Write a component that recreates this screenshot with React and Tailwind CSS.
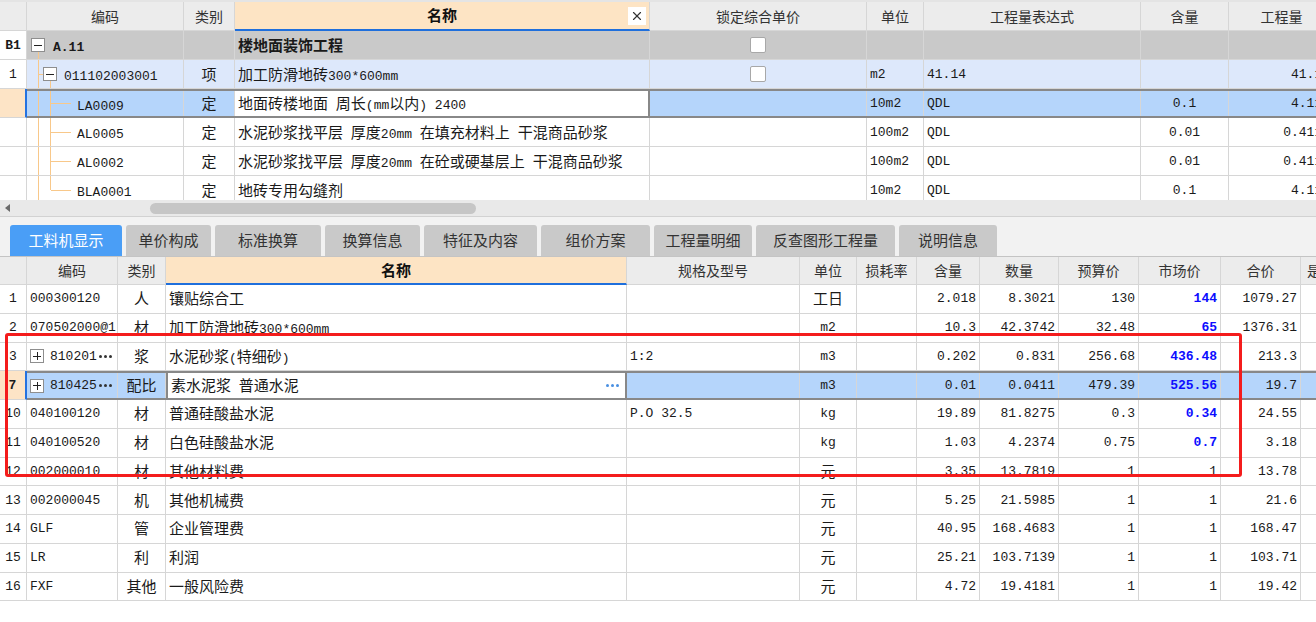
import React from 'react';
import { X } from 'lucide-react';

const CJK_SPLIT = /([\u2E80-\u9FFF\u3000-\u303F\uFF00-\uFFEF]+)/;
const isCJK = (s) => /[\u2E80-\u9FFF\u3000-\u303F\uFF00-\uFFEF]/.test(s);

function Txt({ s, bold, blue }) {
  if (!s) return null;
  return (
    <span
      className={`font-['Liberation_Mono',monospace] text-[13px] leading-none whitespace-pre ${bold ? 'font-bold' : ''} ${
        blue ? 'text-[#0d0dff]' : ''
      }`}
    >
      {s
        .split(CJK_SPLIT)
        .filter(Boolean)
        .map((p, i) =>
          isCJK(p) ? (
            <span key={i} className="font-['Noto_Sans_CJK_SC',sans-serif] text-[15px]">
              {p}
            </span>
          ) : (
            <React.Fragment key={i}>{p}</React.Fragment>
          )
        )}
    </span>
  );
}

const TOPW = ['w-[27px]', 'w-[157px]', 'w-[51px]', 'w-[415px]', 'w-[217px]', 'w-[57px]', 'w-[217px]', 'w-[88px]', 'w-[106px]'];
const BW = ['w-[27px]', 'w-[91px]', 'w-[48px]', 'w-[461px]', 'w-[173px]', 'w-[57px]', 'w-[60px]', 'w-[63px]', 'w-[79px]', 'w-[80px]', 'w-[82px]', 'w-[80px]', 'w-[60px]'];

function Cell({ w, a = '', cls, children }) {
  return (
    <div className={`shrink-0 h-full flex items-center overflow-hidden whitespace-nowrap leading-none ${w} ${a} ${cls ?? 'border-r border-[#d6d6d6]'}`}>
      {children}
    </div>
  );
}

function H({ w, children, a = 'justify-center' }) {
  return (
    <div className={`shrink-0 h-full flex items-center overflow-hidden whitespace-nowrap border-r border-b border-[#d6d6d6] text-[14px] text-[#333] ${a} ${w}`}>
      {children}
    </div>
  );
}

function NameH({ w, close }) {
  return (
    <div className={`relative shrink-0 h-full flex items-center justify-center border-r border-r-[#d6d6d6] border-b-2 border-b-[#1f6fdc] bg-[#fde4c4] text-[15px] font-bold text-[#111] ${w}`}>
      名称
      {close && (
        <div className="absolute right-[3px] top-1/2 -translate-y-1/2 w-[18px] h-[18px] bg-white flex items-center justify-center">
          <X size={14} strokeWidth={2} color="#333" />
        </div>
      )}
    </div>
  );
}

function Row({ h, numW, num, numBold, sel, bg = 'bg-white', children }) {
  if (sel) {
    return (
      <div className={`flex w-max ${h}`}>
        <div className={`shrink-0 ${numW} h-full flex items-center justify-center leading-none border-b border-b-[#d6d6d6] border-r-2 border-r-[#2472e0] bg-[#fde4c6]`}>
          <Txt s={num} bold={numBold} />
        </div>
        <div className={`flex h-full border-y-2 border-[#888888] ${bg}`}>{children}</div>
      </div>
    );
  }
  return (
    <div className={`flex w-max ${h} border-b border-[#d6d6d6]`}>
      <div className={`shrink-0 ${numW} h-full flex items-center justify-center leading-none border-r border-[#d6d6d6] bg-white`}>
        <Txt s={num} bold={numBold} />
      </div>
      <div className={`flex h-full ${bg}`}>{children}</div>
    </div>
  );
}

const OR = '#f8c88a';

function TreeBox({ cls }) {
  return (
    <div className={`absolute top-1/2 -translate-y-1/2 w-[14px] h-[14px] bg-white border border-[#8e8e8e] flex items-center justify-center ${cls}`}>
      <div className="w-[8px] h-px bg-[#222]" />
    </div>
  );
}

function Tree({ kind, text, bold }) {
  return (
    <>
      <svg className="absolute inset-0 w-full h-full" shapeRendering="crispEdges">
        {kind === 'root' && <line x1="11.5" y1="50%" x2="11.5" y2="100%" stroke={OR} strokeWidth="1" />}
        {kind !== 'root' && <line x1="11.5" y1="0" x2="11.5" y2="100%" stroke={OR} strokeWidth="1" />}
        {kind === 'l1' && (
          <>
            <line x1="11.5" y1="50%" x2="17" y2="50%" stroke={OR} strokeWidth="1" />
            <line x1="23.5" y1="50%" x2="23.5" y2="100%" stroke={OR} strokeWidth="1" />
          </>
        )}
        {kind === 'leaf' && <line x1="23.5" y1="0" x2="23.5" y2="100%" stroke={OR} strokeWidth="1" />}
        {kind === 'last' && <line x1="23.5" y1="0" x2="23.5" y2="50%" stroke={OR} strokeWidth="1" />}
        {(kind === 'leaf' || kind === 'last') && <line x1="23.5" y1="50%" x2="44" y2="50%" stroke={OR} strokeWidth="1" />}
      </svg>
      {kind === 'root' && <TreeBox cls="left-[4px]" />}
      {kind === 'l1' && <TreeBox cls="left-[16px]" />}
      <span className={`relative leading-none ${kind === 'root' ? 'ml-[26px]' : kind === 'l1' ? 'ml-[37px]' : 'ml-[50px]'}`}>
        <Txt s={text} bold={bold} />
      </span>
    </>
  );
}

function Check() {
  return <div className="w-[16px] h-[16px] bg-white border border-[#a8a8a8] rounded-[2px]" />;
}

const topRows = [
  { num: 'B1', numBold: true, bg: 'bg-[#c9c9c9]', kind: 'root', code: 'A.11', codeBold: true, cat: '', name: '楼地面装饰工程', nameBold: true, check: true, unit: '', expr: '', qty: '', amt: '' },
  { num: '1', bg: 'bg-[#dde8fb]', kind: 'l1', code: '011102003001', cat: '项', name: '加工防滑地砖300*600mm', check: true, unit: 'm2', expr: '41.14', qty: '', amt: '41.14' },
  { num: '', sel: true, bg: 'bg-[#b5d5fb]', kind: 'leaf', code: 'LA0009', cat: '定', name: '地面砖楼地面 周长(mm以内) 2400', unit: '10m2', expr: 'QDL', qty: '0.1', amt: '4.114' },
  { num: '', kind: 'leaf', code: 'AL0005', cat: '定', name: '水泥砂浆找平层 厚度20mm 在填充材料上 干混商品砂浆', unit: '100m2', expr: 'QDL', qty: '0.01', amt: '0.4114' },
  { num: '', kind: 'leaf', code: 'AL0002', cat: '定', name: '水泥砂浆找平层 厚度20mm 在砼或硬基层上 干混商品砂浆', unit: '100m2', expr: 'QDL', qty: '0.01', amt: '0.4114' },
  { num: '', kind: 'last', code: 'BLA0001', cat: '定', name: '地砖专用勾缝剂', unit: '10m2', expr: 'QDL', qty: '0.1', amt: '4.114' },
];

function TopTable() {
  return (
    <div className="h-[200px] overflow-hidden border-t-2 border-[#e4e4e4]">
      <div className="flex w-max h-[29px] bg-[#ececec]">
        <H w={TOPW[0]} />
        <H w={TOPW[1]}>编码</H>
        <H w={TOPW[2]}>类别</H>
        <NameH w={TOPW[3]} close />
        <H w={TOPW[4]}>锁定综合单价</H>
        <H w={TOPW[5]}>单位</H>
        <H w={TOPW[6]}>工程量表达式</H>
        <H w={TOPW[7]}>含量</H>
        <H w={TOPW[8]}>工程量</H>
      </div>
      {topRows.map((r, i) => (
        <Row key={i} h="h-[29px]" numW={TOPW[0]} num={r.num} numBold={r.numBold} sel={r.sel} bg={r.bg}>
          <Cell w={TOPW[1]} a="relative">
            <Tree kind={r.kind} text={r.code} bold={r.codeBold} />
          </Cell>
          <Cell w={TOPW[2]} a="justify-center">
            <Txt s={r.cat} />
          </Cell>
          <Cell w={TOPW[3]} a="justify-start pl-[3px]" cls={r.sel ? 'bg-white border-r-2 border-[#888888]' : undefined}>
            <Txt s={r.name} bold={r.nameBold} />
          </Cell>
          <Cell w={TOPW[4]} a="justify-center">
            {r.check && <Check />}
          </Cell>
          <Cell w={TOPW[5]} a="justify-start pl-[3px]">
            <Txt s={r.unit} />
          </Cell>
          <Cell w={TOPW[6]} a="justify-start pl-[3px]">
            <Txt s={r.expr} />
          </Cell>
          <Cell w={TOPW[7]} a="justify-center">
            <Txt s={r.qty} />
          </Cell>
          <Cell w={TOPW[8]} a="justify-end pr-[4px]">
            <Txt s={r.amt} />
          </Cell>
        </Row>
      ))}
    </div>
  );
}

function ScrollBar() {
  return (
    <div className="h-[17px] bg-[#e9e9e9] border-b border-[#d2d2d2] flex items-center">
      <svg width="6" height="8" className="ml-[5px]" viewBox="0 0 6 8">
        <polygon points="5,0 5,8 0,4" fill="#6b6b6b" />
      </svg>
      <div className="ml-[139px] w-[326px] h-[11px] rounded-full bg-[#c6c6c6]" />
    </div>
  );
}

const tabs = [
  { t: '工料机显示', w: 'w-[112px]', active: true },
  { t: '单价构成', w: 'w-[85px]' },
  { t: '标准换算', w: 'w-[106px]' },
  { t: '换算信息', w: 'w-[95px]' },
  { t: '特征及内容', w: 'w-[113px]' },
  { t: '组价方案', w: 'w-[109px]' },
  { t: '工程量明细', w: 'w-[98px]' },
  { t: '反查图形工程量', w: 'w-[139px]' },
  { t: '说明信息', w: 'w-[98px]' },
];

function Tabs() {
  return (
    <div className="h-[40px] bg-[#f2f2f2] border-b border-[#c4c4c4] flex items-end gap-[4px] pl-[10px]">
      {tabs.map((t) => (
        <div
          key={t.t}
          className={`h-[31px] ${t.w} rounded-t-[3px] flex items-center justify-center text-[15px] ${
            t.active ? 'bg-[#4a9ef6] text-white' : 'bg-[#c9c9c9] text-[#333]'
          }`}
        >
          {t.t}
        </div>
      ))}
    </div>
  );
}

const botRows = [
  { num: '1', code: '000300120', cat: '人', name: '镶贴综合工', spec: '', unit: '工日', q: '2.018', n: '8.3021', b: '130', m: '144', mb: true, t: '1079.27' },
  { num: '2', code: '070502000@1', cat: '材', name: '加工防滑地砖300*600mm', spec: '', unit: 'm2', q: '10.3', n: '42.3742', b: '32.48', m: '65', mb: true, t: '1376.31' },
  { num: '3', plus: true, code: '810201', cat: '浆', name: '水泥砂浆(特细砂)', spec: '1:2', unit: 'm3', q: '0.202', n: '0.831', b: '256.68', m: '436.48', mb: true, t: '213.3' },
  { num: '7', sel: true, plus: true, code: '810425', cat: '配比', name: '素水泥浆 普通水泥', spec: '', unit: 'm3', q: '0.01', n: '0.0411', b: '479.39', m: '525.56', mb: true, t: '19.7' },
  { num: '10', code: '040100120', cat: '材', name: '普通硅酸盐水泥', spec: 'P.O 32.5', unit: 'kg', q: '19.89', n: '81.8275', b: '0.3', m: '0.34', mb: true, t: '24.55' },
  { num: '11', code: '040100520', cat: '材', name: '白色硅酸盐水泥', spec: '', unit: 'kg', q: '1.03', n: '4.2374', b: '0.75', m: '0.7', mb: true, t: '3.18' },
  { num: '12', code: '002000010', cat: '材', name: '其他材料费', spec: '', unit: '元', q: '3.35', n: '13.7819', b: '1', m: '1', t: '13.78' },
  { num: '13', code: '002000045', cat: '机', name: '其他机械费', spec: '', unit: '元', q: '5.25', n: '21.5985', b: '1', m: '1', t: '21.6' },
  { num: '14', code: 'GLF', cat: '管', name: '企业管理费', spec: '', unit: '元', q: '40.95', n: '168.4683', b: '1', m: '1', t: '168.47' },
  { num: '15', code: 'LR', cat: '利', name: '利润', spec: '', unit: '元', q: '25.21', n: '103.7139', b: '1', m: '1', t: '103.71' },
  { num: '16', code: 'FXF', cat: '其他', name: '一般风险费', spec: '', unit: '元', q: '4.72', n: '19.4181', b: '1', m: '1', t: '19.42' },
];

function PlusBox() {
  return (
    <div className="relative shrink-0 ml-[3px] w-[14px] h-[14px] bg-white border border-[#8e8e8e] flex items-center justify-center">
      <div className="absolute w-[8px] h-px bg-[#222]" />
      <div className="absolute w-px h-[8px] bg-[#222]" />
    </div>
  );
}

function Dots({ color }) {
  return (
    <span className="flex items-center gap-[2px]">
      <span className={`w-[3px] h-[3px] rounded-full ${color}`} />
      <span className={`w-[3px] h-[3px] rounded-full ${color}`} />
      <span className={`w-[3px] h-[3px] rounded-full ${color}`} />
    </span>
  );
}

function BottomTable() {
  return (
    <div>
      <div className="flex w-max h-[28px] bg-[#ececec]">
        <H w={BW[0]} />
        <H w={BW[1]}>编码</H>
        <H w={BW[2]}>类别</H>
        <NameH w={BW[3]} />
        <H w={BW[4]}>规格及型号</H>
        <H w={BW[5]}>单位</H>
        <H w={BW[6]}>损耗率</H>
        <H w={BW[7]}>含量</H>
        <H w={BW[8]}>数量</H>
        <H w={BW[9]}>预算价</H>
        <H w={BW[10]}>市场价</H>
        <H w={BW[11]}>合价</H>
        <H w={BW[12]} a="justify-start pl-[6px]">是否暂估</H>
      </div>
      {botRows.map((r) => (
        <Row key={r.num} h="h-[28.75px]" numW={BW[0]} num={r.num} numBold={r.sel} sel={r.sel} bg={r.sel ? 'bg-[#b5d5fb]' : 'bg-white'}>
          <Cell w={BW[1]} a={r.plus ? 'justify-start' : 'justify-start pl-[3px]'}>
            {r.plus && <PlusBox />}
            {r.plus ? (
              <span className="ml-[6px] flex items-center gap-[2px]">
                <Txt s={r.code} />
                <Dots color="bg-[#333]" />
              </span>
            ) : (
              <Txt s={r.code} />
            )}
          </Cell>
          <Cell w={BW[2]} a="justify-center">
            <Txt s={r.cat} />
          </Cell>
          <Cell w={BW[3]} a="justify-start pl-[3px]" cls={r.sel ? 'bg-white border-x-2 border-[#888888]' : undefined}>
            <Txt s={r.name} />
            {r.sel && (
              <span className="ml-auto mr-[6px]">
                <Dots color="bg-[#4a90e2]" />
              </span>
            )}
          </Cell>
          <Cell w={BW[4]} a="justify-start pl-[3px]">
            <Txt s={r.spec} />
          </Cell>
          <Cell w={BW[5]} a="justify-center">
            <Txt s={r.unit} />
          </Cell>
          <Cell w={BW[6]} />
          <Cell w={BW[7]} a="justify-end pr-[3px]">
            <Txt s={r.q} />
          </Cell>
          <Cell w={BW[8]} a="justify-end pr-[3px]">
            <Txt s={r.n} />
          </Cell>
          <Cell w={BW[9]} a="justify-end pr-[3px]">
            <Txt s={r.b} />
          </Cell>
          <Cell w={BW[10]} a="justify-end pr-[3px]">
            <Txt s={r.m} bold={r.mb} blue={r.mb} />
          </Cell>
          <Cell w={BW[11]} a="justify-end pr-[3px]">
            <Txt s={r.t} />
          </Cell>
          <Cell w={BW[12]} />
        </Row>
      ))}
    </div>
  );
}

export default function App() {
  return (
    <div className="relative w-[1316px] h-[622px] overflow-hidden bg-white text-[#1a1a1a] font-['Noto_Sans_CJK_SC',sans-serif]">
      <TopTable />
      <ScrollBar />
      <Tabs />
      <BottomTable />
      <div className="absolute left-[5px] top-[333px] w-[1237px] h-[144px] border-[3px] border-[#f41c1c] rounded-[3px] pointer-events-none" />
    </div>
  );
}
